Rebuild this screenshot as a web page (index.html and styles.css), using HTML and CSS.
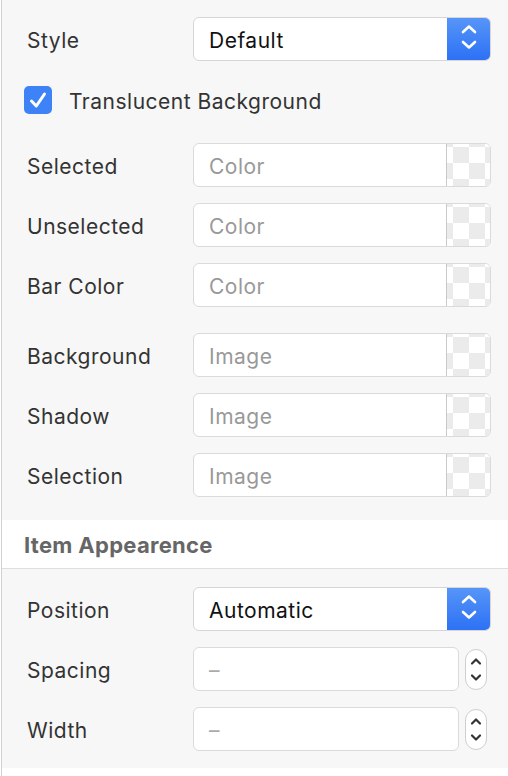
FILE: index.html
```html
<!DOCTYPE html>
<html>
<head>
<meta charset="utf-8">
<link rel="stylesheet" href="styles.css">
</head>
<body>
<div class="inspector">
  <section class="group group-top">
    <div class="row row-first">
      <span class="label">Style</span>
      <div class="select">
        <span class="select-value">Default</span>
        <span class="select-btn">
          <svg width="44" height="44" viewBox="0 0 44 44"><path d="M16 15 L22 9.5 L28 15 M16 25 L22 30.5 L28 25" fill="none" stroke="#fff" stroke-width="2.6" stroke-linecap="round" stroke-linejoin="round"/></svg>
        </span>
      </div>
    </div>
    <label class="check-row">
      <span class="checkbox"><svg width="28" height="28" viewBox="0 0 28 28"><path d="M7.5 15 L12.3 20 L20.5 8" fill="none" stroke="#fff" stroke-width="3" stroke-linecap="round" stroke-linejoin="round"/></svg></span>
      <span class="check-label">Translucent Background</span>
    </label>
    <div class="row row-gap-lg">
      <span class="label">Selected</span>
      <div class="field"><span class="placeholder">Color</span><span class="swatch"></span></div>
    </div>
    <div class="row">
      <span class="label">Unselected</span>
      <div class="field"><span class="placeholder">Color</span><span class="swatch"></span></div>
    </div>
    <div class="row">
      <span class="label">Bar Color</span>
      <div class="field"><span class="placeholder">Color</span><span class="swatch"></span></div>
    </div>
    <div class="row row-gap-md">
      <span class="label">Background</span>
      <div class="field"><span class="placeholder">Image</span><span class="swatch"></span></div>
    </div>
    <div class="row">
      <span class="label">Shadow</span>
      <div class="field"><span class="placeholder">Image</span><span class="swatch"></span></div>
    </div>
    <div class="row">
      <span class="label">Selection</span>
      <div class="field"><span class="placeholder">Image</span><span class="swatch"></span></div>
    </div>
  </section>
  <header class="section-header">Item Appearence</header>
  <section class="group group-bottom">
    <div class="row row-first">
      <span class="label">Position</span>
      <div class="select">
        <span class="select-value">Automatic</span>
        <span class="select-btn">
          <svg width="44" height="44" viewBox="0 0 44 44"><path d="M16 15 L22 9.5 L28 15 M16 25 L22 30.5 L28 25" fill="none" stroke="#fff" stroke-width="2.6" stroke-linecap="round" stroke-linejoin="round"/></svg>
        </span>
      </div>
    </div>
    <div class="row">
      <span class="label">Spacing</span>
      <div class="num">
        <div class="num-field"><span class="placeholder dash">–</span></div>
        <span class="stepper"><svg width="22" height="41" viewBox="0 0 22 41"><path d="M7 14.5 L11 10.5 L15 14.5 M7 26.5 L11 30.5 L15 26.5" fill="none" stroke="#333" stroke-width="2.2" stroke-linecap="round" stroke-linejoin="round"/></svg></span>
      </div>
    </div>
    <div class="row">
      <span class="label">Width</span>
      <div class="num">
        <div class="num-field"><span class="placeholder dash">–</span></div>
        <span class="stepper"><svg width="22" height="41" viewBox="0 0 22 41"><path d="M7 14.5 L11 10.5 L15 14.5 M7 26.5 L11 30.5 L15 26.5" fill="none" stroke="#333" stroke-width="2.2" stroke-linecap="round" stroke-linejoin="round"/></svg></span>
      </div>
    </div>
  </section>
</div>
</body>
</html>
```

FILE: styles.css
```css
* { box-sizing: border-box; }
html, body { margin: 0; padding: 0; background: #fff; }
body {
  font-family: Inter, "Open Sans", "Liberation Sans", sans-serif;
  font-size: 21px;
  letter-spacing: 0.5px;
  color: #333;
  width: 508px;
  height: 776px;
}
.inspector {
  margin-left: 1px;
  border-left: 1px solid #d2d2d2;
  height: 776px;
}
.group { background: #f7f7f7; padding: 0 17px 0 25px; }
.group-top { padding-top: 17px; padding-bottom: 23px; }
.group-bottom { padding-top: 18px; padding-bottom: 17px; }
.row {
  display: flex;
  align-items: center;
  height: 44px;
  margin-top: 16px;
}
.row-first { margin-top: 0; }
.row-gap-lg { margin-top: 29px; }
.row-gap-md { margin-top: 26px; }
.label { width: 166px; flex: none; color: #333; padding-top: 3px; }
.select, .field {
  flex: none;
  width: 298px;
  height: 44px;
  background: #fff;
  border: 1px solid #dadada;
  border-radius: 6px;
  display: flex;
  align-items: center;
  overflow: hidden;
}
.select { border-color: #d6d6d6; }
.select-value { flex: 1; padding-left: 15px; padding-top: 2px; color: #111; }
.select-btn {
  flex: none;
  width: 44px;
  height: 44px;
  margin: -1px -1px -1px 0;
  border-radius: 0 6px 6px 0;
  background: linear-gradient(#5796f8, #2c70f5);
  box-shadow: inset -1px 0 0 rgba(0,0,0,0.08);
  display: flex;
}
.placeholder { flex: 1; padding-left: 15px; padding-top: 2px; color: #999; }
.swatch {
  flex: none;
  width: 44px;
  align-self: stretch;
  border-left: 1px solid #c9c9c9;
  background-image: conic-gradient(#fff 25%, #ebebeb 0 50%, #fff 0 75%, #ebebeb 0);
  background-size: 32px 32px;
  background-position: 6px 3px;
}
.check-row {
  display: flex;
  align-items: center;
  height: 28px;
  margin-top: 25px;
  margin-left: -3px;
}
.checkbox {
  width: 28px;
  height: 28px;
  border-radius: 5px;
  background: #3d83f7;
  display: flex;
  flex: none;
}
.check-label { margin-left: 17px; color: #333; padding-top: 3px; }
.section-header {
  background: #fff;
  height: 49px;
  border-bottom: 1px solid #dedede;
  padding-left: 22px;
  padding-top: 2px;
  display: flex;
  align-items: center;
  font-weight: 700;
  font-size: 22px;
  letter-spacing: 0.3px;
  color: #666;
}
.num { display: flex; align-items: center; gap: 6px; width: 298px; }
.num-field {
  width: 266px;
  height: 44px;
  background: #fff;
  border: 1px solid #dadada;
  border-radius: 6px;
  display: flex;
  align-items: center;
}
.dash { color: #aaa; }
.stepper {
  width: 22px;
  height: 41px;
  border: 1px solid #cfcfcf;
  border-radius: 11px;
  background: #fff;
  display: flex;
  overflow: hidden;
}
.stepper svg { margin: -1px; }
```
